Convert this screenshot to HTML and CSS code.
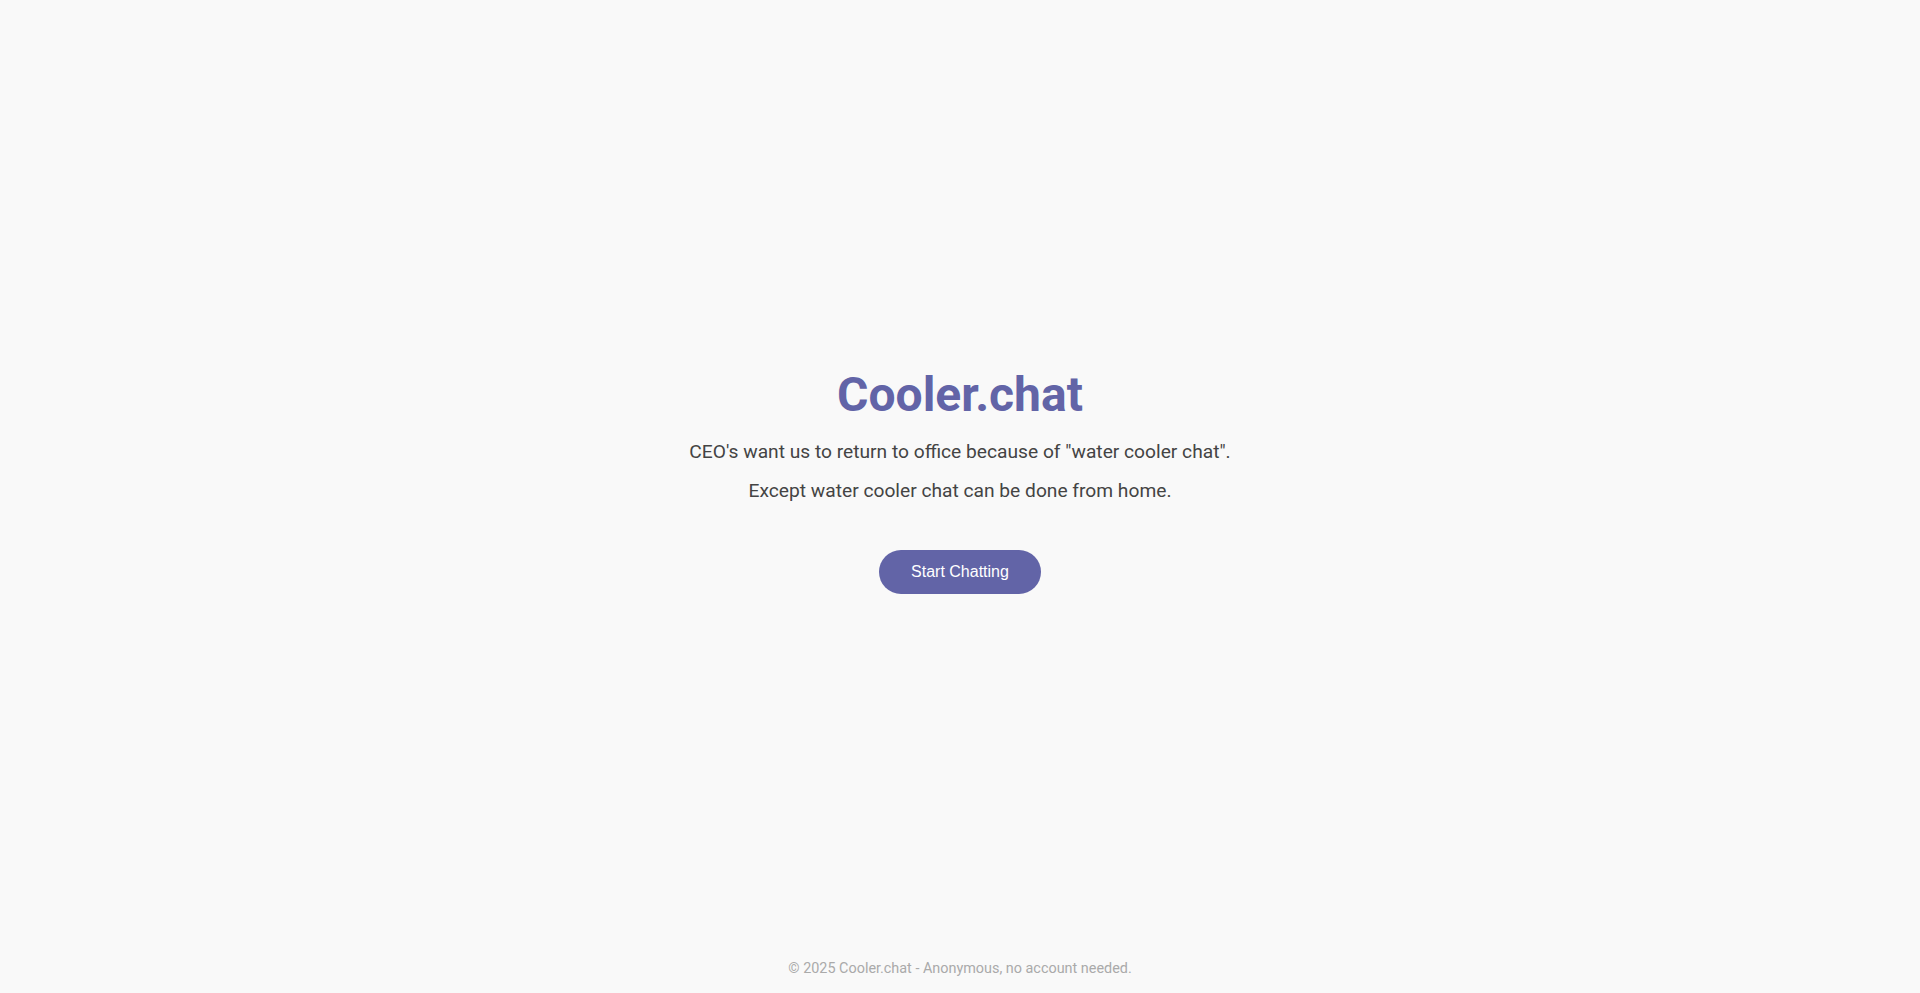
FILE: index.html
```html
<!DOCTYPE html>
<html lang="en">
<head>
  <meta charset="UTF-8" />
  <meta name="viewport" content="width=device-width, initial-scale=1.0" />
  <title>Cooler.chat</title>
  <link rel="stylesheet" href="styles.css">
</head>
<body>
  <main class="landing">
    <h1>Cooler.chat</h1>
    <p>CEO's want us to return to office because of "water cooler chat".</p>
    <p>Except water cooler chat can be done from home.</p>
    <button class="start-btn">Start Chatting</button>
  </main>
  <footer>
    &copy; 2025 Cooler.chat - Anonymous, no account needed.
  </footer>
</body>
</html>
```

FILE: styles.css
```css
body {
  margin: 0;
  min-height: 100vh;
  display: flex;
  flex-direction: column;
  font-family: 'Roboto', sans-serif;
  background-color: #f9f9f9;
  color: #444;
}

.landing {
  flex: 1;
  display: flex;
  flex-direction: column;
  align-items: center;
  justify-content: center;
  text-align: center;
  padding-top: 14px;
}

.landing h1 {
  margin: 0 0 17px;
  font-size: 3rem;
  color: #6264a7;
}

.landing p {
  margin: 0;
  font-size: 1.2rem;
}

.landing p + p {
  margin-top: 16px;
}

.start-btn {
  margin-top: 48px;
  padding: 13px 32px;
  font-size: 1rem;
  background: #6264a7;
  color: white;
  border: none;
  border-radius: 30px;
  cursor: pointer;
}

footer {
  text-align: center;
  font-size: 0.9rem;
  color: #aaa;
  padding: 14px 12px 16px;
}
```
